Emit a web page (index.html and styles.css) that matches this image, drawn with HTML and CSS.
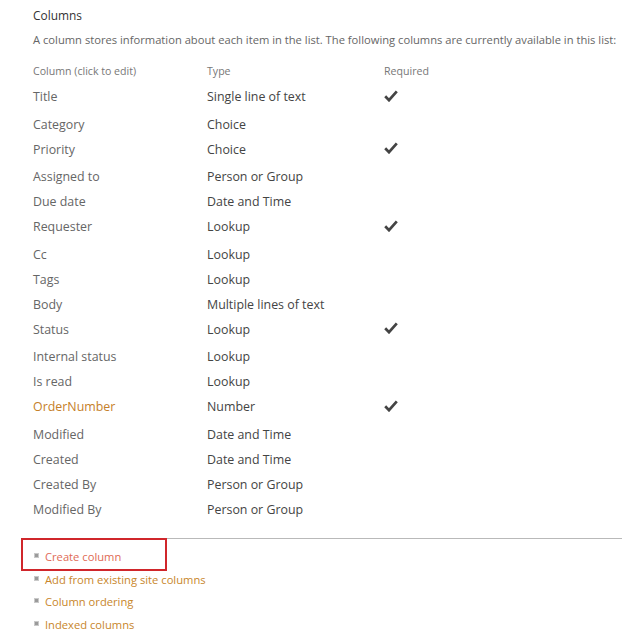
FILE: index.html
```html
<!DOCTYPE html>
<html lang="en">
<head>
<meta charset="utf-8">
<title>Columns</title>
<link rel="stylesheet" href="styles.css">
</head>
<body>
<div class="page">
  <section class="columns-section">
    <h2 class="section-title">Columns</h2>
    <p class="section-desc">A column stores information about each item in the list. The following columns are currently available in this list:</p>
    <div class="col-table">
      <div class="row head"><span class="c-name">Column (click to edit)</span><span class="c-type">Type</span><span class="c-req">Required</span></div>
      <div class="row req"><span class="c-name">Title</span><span class="c-type">Single line of text</span><span class="c-req"><svg class="check" viewBox="0 0 14 12" width="14" height="12"><polyline points="1.2,6.3 5,10.2 12.8,1.4"/></svg></span></div>
      <div class="row"><span class="c-name">Category</span><span class="c-type">Choice</span><span class="c-req"></span></div>
      <div class="row req"><span class="c-name">Priority</span><span class="c-type">Choice</span><span class="c-req"><svg class="check" viewBox="0 0 14 12" width="14" height="12"><polyline points="1.2,6.3 5,10.2 12.8,1.4"/></svg></span></div>
      <div class="row"><span class="c-name">Assigned to</span><span class="c-type">Person or Group</span><span class="c-req"></span></div>
      <div class="row"><span class="c-name">Due date</span><span class="c-type">Date and Time</span><span class="c-req"></span></div>
      <div class="row req"><span class="c-name">Requester</span><span class="c-type">Lookup</span><span class="c-req"><svg class="check" viewBox="0 0 14 12" width="14" height="12"><polyline points="1.2,6.3 5,10.2 12.8,1.4"/></svg></span></div>
      <div class="row"><span class="c-name">Cc</span><span class="c-type">Lookup</span><span class="c-req"></span></div>
      <div class="row"><span class="c-name">Tags</span><span class="c-type">Lookup</span><span class="c-req"></span></div>
      <div class="row"><span class="c-name">Body</span><span class="c-type">Multiple lines of text</span><span class="c-req"></span></div>
      <div class="row req"><span class="c-name">Status</span><span class="c-type">Lookup</span><span class="c-req"><svg class="check" viewBox="0 0 14 12" width="14" height="12"><polyline points="1.2,6.3 5,10.2 12.8,1.4"/></svg></span></div>
      <div class="row"><span class="c-name">Internal status</span><span class="c-type">Lookup</span><span class="c-req"></span></div>
      <div class="row"><span class="c-name">Is read</span><span class="c-type">Lookup</span><span class="c-req"></span></div>
      <div class="row req"><span class="c-name link">OrderNumber</span><span class="c-type">Number</span><span class="c-req"><svg class="check" viewBox="0 0 14 12" width="14" height="12"><polyline points="1.2,6.3 5,10.2 12.8,1.4"/></svg></span></div>
      <div class="row"><span class="c-name">Modified</span><span class="c-type">Date and Time</span><span class="c-req"></span></div>
      <div class="row"><span class="c-name">Created</span><span class="c-type">Date and Time</span><span class="c-req"></span></div>
      <div class="row"><span class="c-name">Created By</span><span class="c-type">Person or Group</span><span class="c-req"></span></div>
      <div class="row"><span class="c-name">Modified By</span><span class="c-type">Person or Group</span><span class="c-req"></span></div>
    </div>
  </section>
  <section class="actions">
    <ul class="action-list">
      <li class="action highlighted"><span class="bullet"></span><a class="action-link create" href="#">Create column</a></li>
      <li class="action"><span class="bullet"></span><a class="action-link" href="#">Add from existing site columns</a></li>
      <li class="action"><span class="bullet"></span><a class="action-link" href="#">Column ordering</a></li>
      <li class="action"><span class="bullet"></span><a class="action-link" href="#">Indexed columns</a></li>
    </ul>
  </section>
</div>
</body>
</html>
```

FILE: styles.css
```css
html, body {
  margin: 0;
  padding: 0;
  background: #ffffff;
}

body {
  font-family: "Open Sans", "Noto Sans", "Liberation Sans", sans-serif;
  font-size: 12.4px;
  color: #444444;
  overflow: hidden;
}

.page {
  width: 622px;
}

.columns-section {
  padding: 6px 0 0 33px;
}

.section-title {
  margin: 0;
  font-size: 11.9px;
  font-weight: normal;
  line-height: 18px;
  color: #333333;
}

.section-desc {
  margin: 7px 0 0 0;
  font-size: 11.2px;
  line-height: 18px;
  color: #666666;
  white-space: nowrap;
}

.col-table {
  margin-top: 10px;
}

.row {
  display: grid;
  grid-template-columns: 174px 176px 1fr;
  height: 25px;
  line-height: 25px;
  align-items: start;
}

.row.req {
  height: 27.6px;
}

.row.head {
  font-size: 10.6px;
}

.c-name {
  color: #666666;
}

.row.head .c-name,
.row.head .c-type,
.row.head .c-req {
  color: #777777;
}

.c-type {
  color: #444444;
}

.c-name.link {
  color: #c5802a;
}

.c-req {
  display: flex;
  align-items: center;
  height: 25px;
  padding-left: 1px;
}

.check {
  display: block;
  fill: none;
  stroke: #444444;
  stroke-width: 2.7;
  stroke-linecap: butt;
  stroke-linejoin: miter;
  margin-top: -2px;
}

.actions {
  margin: 16px 0 0 22px;
  border-top: 1px solid #b9b9b9;
  padding-top: 6px;
}

.action-list {
  list-style: none;
  margin: 0;
  padding: 0 0 0 12px;
  font-size: 11.2px;
}

.action {
  position: relative;
  display: flex;
  align-items: center;
  height: 22.7px;
}

.bullet {
  width: 3px;
  height: 3px;
  background: #9a9a9a;
  border: 1px solid #c9c9c9;
  margin-right: 6px;
  margin-top: -2px;
}

.action-link {
  color: #c8862a;
  text-decoration: none;
}

.action-link.create {
  color: #e06a55;
}

.action.highlighted::after {
  content: "";
  position: absolute;
  left: -13px;
  top: -7px;
  width: 142px;
  height: 29px;
  border: 2px solid #d0262b;
  pointer-events: none;
}
```
